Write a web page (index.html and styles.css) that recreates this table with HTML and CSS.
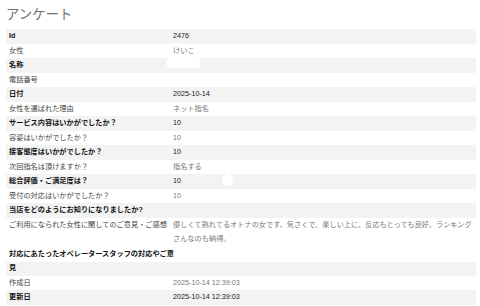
FILE: index.html
```html
<!DOCTYPE html>
<html lang="ja">
<head>
<meta charset="utf-8">
<title>アンケート</title>
<link rel="stylesheet" href="styles.css">
</head>
<body>
<h1 class="title">アンケート</h1>
<div class="list">
  <div class="row"><div class="label">Id</div><div class="value">2476</div></div>
  <div class="row"><div class="label">女性</div><div class="value">けいこ</div></div>
  <div class="row masked"><div class="label">名称</div><div class="value"></div><span class="mask pill"></span></div>
  <div class="row"><div class="label">電話番号</div><div class="value"></div></div>
  <div class="row"><div class="label">日付</div><div class="value">2025-10-14</div></div>
  <div class="row"><div class="label">女性を選ばれた理由</div><div class="value">ネット指名</div></div>
  <div class="row"><div class="label">サービス内容はいかがでしたか？</div><div class="value">10</div></div>
  <div class="row"><div class="label">容姿はいかがでしたか？</div><div class="value">10</div></div>
  <div class="row"><div class="label">接客態度はいかがでしたか？</div><div class="value">10</div></div>
  <div class="row"><div class="label">次回指名は頂けますか？</div><div class="value">指名する</div></div>
  <div class="row masked"><div class="label">総合評価・ご満足度は？</div><div class="value">10</div><span class="mask dot"></span></div>
  <div class="row"><div class="label">受付の対応はいかがでしたか？</div><div class="value">10</div></div>
  <div class="row"><div class="label">当店をどのようにお知りになりましたか?</div><div class="value"></div></div>
  <div class="row"><div class="label">ご利用になられた女性に関してのご意見・ご感想</div><div class="value">優しくて熟れてるオトナの女です。気さくで、楽しい上に、反応もとっても良好。ランキングさんなのも納得。</div></div>
  <div class="row split"><div class="label wide">対応にあたったオペレータースタッフの対応やご意見</div></div>
  <div class="row"><div class="label">作成日</div><div class="value">2025-10-14 12:39:03</div></div>
  <div class="row"><div class="label">更新日</div><div class="value">2025-10-14 12:39:03</div></div>
</div>
</body>
</html>
```
FILE: styles.css
```css
html, body {
  margin: 0;
  background: #fff;
}
body {
  padding: 0 4px 0 6px;
  font-family: "Liberation Sans", "Noto Sans CJK JP", sans-serif;
  font-size: 7.2px;
}
.title {
  margin: 0 0 3px 0;
  height: 26px;
  line-height: 26px;
  font-size: 13.4px;
  font-weight: normal;
  color: #707070;
  font-family: "Noto Sans CJK JP", sans-serif;
}
.list {
  display: flex;
  flex-direction: column;
}
.row {
  display: grid;
  grid-template-columns: 164px 1fr;
  padding-left: 3px;
  line-height: 14.5px;
  min-height: 14.5px;
  color: #444;
}
.row:nth-child(odd) {
  background: #f3f3f3;
  color: #111;
}
.row:nth-child(odd) .label {
  font-weight: bold;
}
.value {
  color: #7a7a7a;
}
.row:nth-child(odd) .value {
  color: #1a1a1a;
}
.row.split {
  background: linear-gradient(#fff 0 14.5px, #f3f3f3 14.5px);
}
.label.wide {
  grid-column: 1 / -1;
  max-width: 168px;
}
.masked {
  position: relative;
}
.mask {
  position: absolute;
  background: #fff;
}
.mask.pill {
  left: 160px;
  top: 0;
  width: 35px;
  height: 10px;
  border-radius: 5px;
}
.mask.dot {
  left: 216px;
  top: 0;
  width: 11px;
  height: 12px;
  border-radius: 50%;
}
```
